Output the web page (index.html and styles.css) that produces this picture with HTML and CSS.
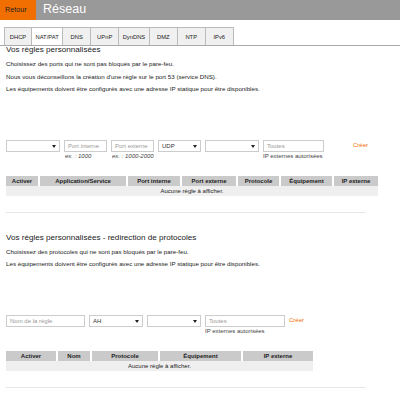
FILE: index.html
```html
<html>

<head>
    <meta charset="utf-8">
    <link rel="stylesheet" href="styles.css">
</head>

<body>
    <div class="topbar">
        <a class="back">Retour</a>
        <h1>Réseau</h1>
    </div>

    <div class="tabs">
        <span class="tab">DHCP</span>
        <span class="tab active">NAT/PAT</span>
        <span class="tab">DNS</span>
        <span class="tab">UPnP</span>
        <span class="tab">DynDNS</span>
        <span class="tab">DMZ</span>
        <span class="tab">NTP</span>
        <span class="tab">IPv6</span>
    </div>

    <div class="content">
        <div class="section">
            <h2>Vos règles personnalisées</h2>
            <p>Choisissez des ports qui ne sont pas bloqués par le pare-feu.</p>
            <p>Nous vous déconseillons la création d'une règle sur le port 53 (service DNS).</p>
            <p>Les équipements doivent être configurés avec une adresse IP statique pour être disponibles.</p>

            <div class="form-row ports">
                <div class="field"><div class="select w-app"></div></div>
                <div class="field">
                    <div class="input w-port">Port interne</div>
                    <div class="hint em">ex. : 1000</div>
                </div>
                <div class="field">
                    <div class="input w-port">Port externe</div>
                    <div class="hint em">ex. : 1000-2000</div>
                </div>
                <div class="field"><div class="select w-proto">UDP</div></div>
                <div class="field"><div class="select w-device"></div></div>
                <div class="field">
                    <div class="input w-ip">Toutes</div>
                    <div class="hint">IP externes autorisées</div>
                </div>
                <a class="create">Créer</a>
            </div>

            <table class="rules rules-ports">
                <tr>
                    <th class="c-act">Activer</th>
                    <th class="c-app">Application/Service</th>
                    <th class="c-pint">Port interne</th>
                    <th class="c-pext">Port externe</th>
                    <th class="c-proto">Protocole</th>
                    <th class="c-dev">Équipement</th>
                    <th class="c-ip">IP externe</th>
                </tr>
                <tr>
                    <td colspan="7" class="empty">Aucune règle à afficher.</td>
                </tr>
            </table>
            <div class="sep"></div>
        </div>

        <div class="section">
            <h2>Vos règles personnalisées - redirection de protocoles</h2>
            <p>Choisissez des protocoles qui ne sont pas bloqués par le pare-feu.</p>
            <p>Les équipements doivent être configurés avec une adresse IP statique pour être disponibles.</p>

            <div class="form-row protocols">
                <div class="field"><div class="input w-name">Nom de la règle</div></div>
                <div class="field"><div class="select w-proto2">AH</div></div>
                <div class="field"><div class="select w-device2"></div></div>
                <div class="field">
                    <div class="input w-ip2">Toutes</div>
                    <div class="hint">IP externes autorisées</div>
                </div>
                <a class="create">Créer</a>
            </div>

            <table class="rules rules-protocols">
                <tr>
                    <th class="d-act">Activer</th>
                    <th class="d-name">Nom</th>
                    <th class="d-proto">Protocole</th>
                    <th class="d-dev">Équipement</th>
                    <th class="d-ip">IP externe</th>
                </tr>
                <tr>
                    <td colspan="5" class="empty">Aucune règle à afficher.</td>
                </tr>
            </table>
            <div class="sep"></div>
        </div>
    </div>
</body>

</html>
```

FILE: styles.css
```css
body {
    margin: 0;
    font-family: "Liberation Sans", Arial, sans-serif;
    color: #333;
    background: #fff;
}

.topbar {
    display: flex;
    height: 20px;
    background: #999;
}

.back {
    width: 36px;
    background: #f16e00;
    color: #222;
    font-size: 7.2px;
    line-height: 20px;
    padding-left: 5px;
    box-sizing: border-box;
}

.topbar h1 {
    margin: 0 0 0 7px;
    font-size: 12.5px;
    font-weight: normal;
    color: #fff;
    line-height: 19px;
}

.tabs {
    display: flex;
    margin-top: 7px;
    padding-left: 4px;
    border-bottom: 1px solid #aaa;
}

.tab {
    height: 18px;
    min-width: 28px;
    padding: 0 3.5px;
    box-sizing: border-box;
    border: 1px solid #bbb;
    border-bottom: none;
    border-left: none;
    background: #f0f0f0;
    font-size: 5.8px;
    line-height: 18px;
    text-align: center;
    color: #222;
}

.tab:first-child {
    border-left: 1px solid #bbb;
}

.tab.active {
    background: #fff;
}

.content {
    padding: 0 6px;
}

.section h2 {
    margin: 0;
    font-size: 8.1px;
    font-weight: normal;
    line-height: 10px;
    color: #222;
}

.section:first-child h2 {
    margin-top: -1px;
}

.section p {
    margin: 0;
    font-size: 6.2px;
    line-height: 12.5px;
    color: #222;
}

.section h2 + p {
    margin-top: 3px;
}

.form-row {
    display: flex;
    align-items: flex-start;
    gap: 4px;
}

.ports {
    margin-top: 44px;
}

.protocols {
    margin-top: 44px;
}

.field {
    display: flex;
    flex-direction: column;
}

.input, .select {
    height: 12px;
    box-sizing: border-box;
    border: 1px solid #ccc;
    background: #fff;
    font-size: 6px;
    line-height: 10px;
    padding-left: 3px;
}

.input {
    color: #999;
}

.select {
    position: relative;
    color: #333;
}

.select::after {
    content: "";
    position: absolute;
    right: 3px;
    top: 4px;
    border-left: 2.5px solid transparent;
    border-right: 2.5px solid transparent;
    border-top: 3px solid #222;
}

.hint {
    font-size: 6px;
    line-height: 9px;
    color: #444;
}

.hint.em {
    font-style: italic;
    padding-left: 1px;
}

.w-app { width: 54px; }
.w-port { width: 43px; }
.w-proto { width: 43px; }
.w-device { width: 54px; }
.w-ip { width: 61px; }
.w-name { width: 79px; }
.w-proto2 { width: 54px; }
.w-device2 { width: 54px; }
.w-ip2 { width: 80px; }

.create {
    color: #f16e00;
    font-size: 6px;
    line-height: 10px;
}

.ports .create {
    margin-left: 25px;
}

.rules {
    border-collapse: collapse;
    table-layout: fixed;
    margin-top: 15px;
    font-size: 6px;
}

.rules-ports {
    width: 360px;
}

.rules-protocols {
    width: 299px;
}

.rules th {
    height: 10px;
    padding: 0;
    background: #cacaca;
    border-right: 2px solid #fff;
    font-weight: bold;
    color: #222;
}

.rules th:last-child {
    border-right: none;
}

.rules .empty {
    height: 10px;
    padding: 0;
    background: #efefef;
    text-align: center;
    color: #222;
}

.c-act { width: 32px; }
.c-app { width: 86px; }
.c-pint { width: 52px; }
.c-pext { width: 54px; }
.c-proto { width: 41px; }
.c-dev { width: 51px; }
.c-ip { width: 44px; }

.d-act { width: 50px; }
.d-name { width: 32px; }
.d-proto { width: 66px; }
.d-dev { width: 81px; }
.d-ip { width: 70px; }

.sep {
    width: 360px;
    height: 1px;
    background: #e6e6e6;
    margin: 16px 0 20px 0;
}
```
